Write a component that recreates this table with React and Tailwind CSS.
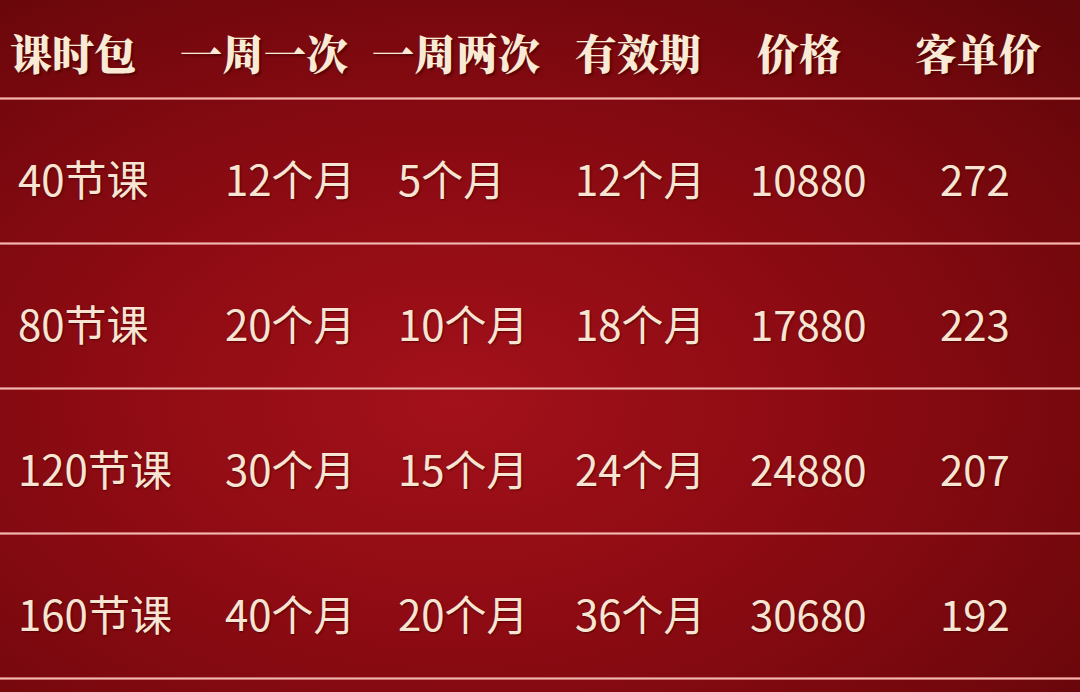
import React from "react";

const rows = [
  ["40节课", "12个月", "5个月", "12个月", "10880", "272"],
  ["80节课", "20个月", "10个月", "18个月", "17880", "223"],
  ["120节课", "30个月", "15个月", "24个月", "24880", "207"],
  ["160节课", "40个月", "20个月", "36个月", "30680", "192"],
];

const headers = ["课时包", "一周一次", "一周两次", "有效期", "价格", "客单价"];

function Line() {
  return <div className="h-[3px] w-full border-y border-[#c9706e] bg-[#f2b7ae]" />;
}

export default function App() {
  return (
    <div className="w-[1080px] h-[692px] overflow-hidden bg-[radial-gradient(ellipse_at_42%_58%,#a3111a_0%,#8e0b13_40%,#74080d_75%,#5e060a_100%)] text-[#f8e4d2]">
      <div
        className="h-[97px] grid grid-cols-[180px_192px_203px_182px_158px_1fr] items-center pt-[7px] text-[42px] font-black leading-none [text-shadow:2px_2px_2px_rgba(60,0,0,0.6)] text-[#f9ead6]"
        style={{ fontFamily: '"Noto Serif CJK SC", "Noto Sans CJK SC", serif' }}
      >
        {headers.map((h, i) => (
          <div key={i} className={i === 0 ? "pl-[10px] whitespace-nowrap" : "whitespace-nowrap"}>
            {h}
          </div>
        ))}
      </div>
      <Line />
      {rows.map((r, ri) => (
        <React.Fragment key={ri}>
          <div
            className="h-[142px] grid grid-cols-[225px_173px_177px_175px_190px_1fr] items-center pt-[14px] text-[42px] font-normal leading-none [text-shadow:1px_1px_2px_rgba(60,0,0,0.7)]"
            style={{ fontFamily: '"Noto Sans CJK SC", "Noto Sans", sans-serif' }}
          >
            {r.map((c, ci) => (
              <div key={ci} className={ci === 0 ? "pl-[18px] whitespace-nowrap" : "whitespace-nowrap"}>
                {c}
              </div>
            ))}
          </div>
          <Line />
        </React.Fragment>
      ))}
    </div>
  );
}
